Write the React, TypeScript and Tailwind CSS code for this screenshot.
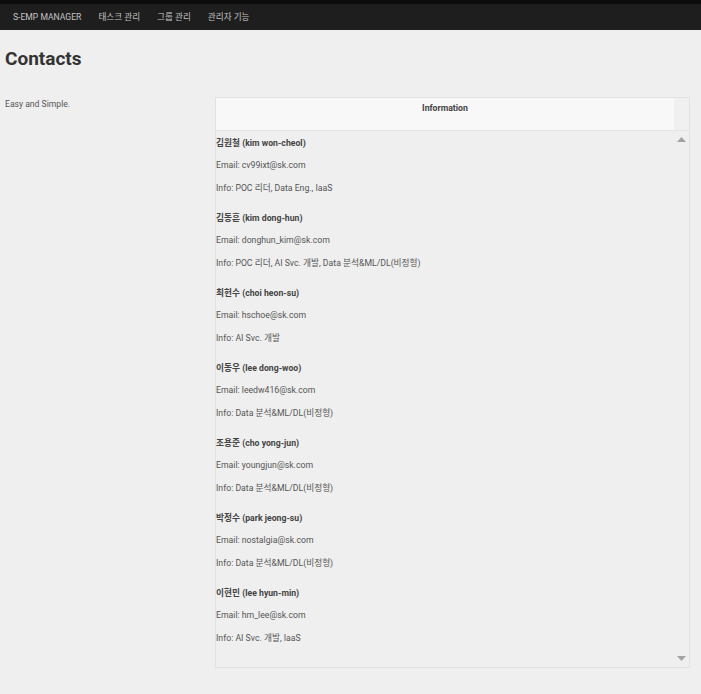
import React from "react";

const contacts = [
  { name: "김원철 (kim won-cheol)", email: "cv99ixt@sk.com", info: "POC 리더, Data Eng., IaaS" },
  { name: "김동훈 (kim dong-hun)", email: "donghun_kim@sk.com", info: "POC 리더, AI Svc. 개발, Data 분석&ML/DL(비정형)" },
  { name: "최헌수 (choi heon-su)", email: "hschoe@sk.com", info: "AI Svc. 개발" },
  { name: "이동우 (lee dong-woo)", email: "leedw416@sk.com", info: "Data 분석&ML/DL(비정형)" },
  { name: "조용준 (cho yong-jun)", email: "youngjun@sk.com", info: "Data 분석&ML/DL(비정형)" },
  { name: "박정수 (park jeong-su)", email: "nostalgia@sk.com", info: "Data 분석&ML/DL(비정형)" },
  { name: "이현민 (lee hyun-min)", email: "hm_lee@sk.com", info: "AI Svc. 개발, IaaS" },
];

const font = "font-['Roboto','Noto_Sans_CJK_KR',sans-serif]";

export default function App() {
  return (
    <div className={`min-h-[694px] w-[701px] bg-[#efefef] ${font}`}>
      {/* top bar */}
      <div className="h-[4px] bg-[#0b0b0b]" />
      <nav className="flex h-[26px] items-center gap-[17px] bg-[#1e1e1e] px-[13px] text-[8.6px] text-[#c4c4c4]">
        <span>S-EMP MANAGER</span>
        <span>태스크 관리</span>
        <span>그룹 관리</span>
        <span>관리자 기능</span>
      </nav>

      <h1 className="mt-[17px] pl-[5px] text-[19px] font-bold leading-[24px] text-[#333]">Contacts</h1>

      <div className="mt-[26px] flex">
        <div className="w-[215px] pl-[5px] pt-[1px] text-[8.6px] leading-[12px] text-[#555]">Easy and Simple.</div>

        <div className="flex h-[571px] w-[475px] flex-col border border-[#e2e2e2]">
          <div className="flex h-[33px] border-b border-[#e4e4e4]">
            <div className="flex-1 bg-[#f8f8f8] pt-[4px] text-center text-[8.7px] font-bold text-[#444]">Information</div>
            <div className="w-[15px] bg-[#f0f0f0]" />
          </div>
          <div className="flex flex-1">
            <div className="flex-1 pt-[1px] text-[8.7px] text-[#555]">
              {contacts.map((c) => (
                <div key={c.email} className="pb-[7px]">
                  <div className="h-[22px] leading-[22px] font-bold text-[#444]">{c.name}</div>
                  <div className="h-[23px] leading-[23px]">Email: {c.email}</div>
                  <div className="h-[23px] leading-[23px]">Info: {c.info}</div>
                </div>
              ))}
            </div>
            <div className="flex w-[15px] flex-col items-center justify-between py-[6px]">
              <svg width="9" height="5" viewBox="0 0 9 5"><path d="M4.5 0 L9 5 H0 Z" fill="#a3a3a3" /></svg>
              <svg width="9" height="5" viewBox="0 0 9 5"><path d="M0 0 H9 L4.5 5 Z" fill="#a3a3a3" /></svg>
            </div>
          </div>
        </div>
      </div>
    </div>
  );
}
